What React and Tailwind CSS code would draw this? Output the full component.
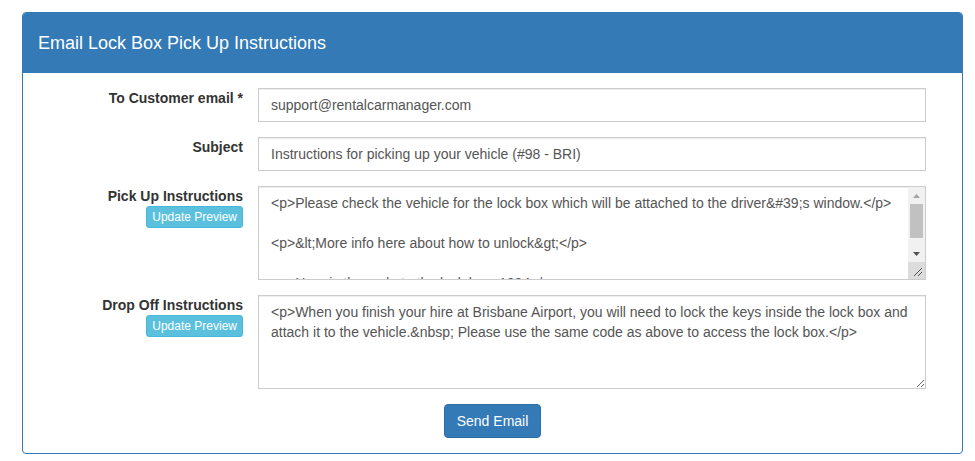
const pickUp = `<p>Please check the vehicle for the lock box which will be attached to the driver&#39;s window.</p>

<p>&lt;More info here about how to unlock&gt;</p>

<p>Here is the code to the lock box: 1234</p>

<p>Thanks for choosing us.</p>`;

const dropOff = `<p>When you finish your hire at Brisbane Airport, you will need to lock the keys inside the lock box and attach it to the vehicle.&nbsp; Please use the same code as above to access the lock box.</p>`;

const inputCls =
  'w-[668px] h-[34px] border border-[#ccc] bg-white px-3 text-[14px] text-[#555] shadow-[inset_0_1px_1px_rgba(0,0,0,0.075)] outline-none';

const areaCls =
  'block w-[668px] h-[94px] border border-[#ccc] bg-white px-3 py-1.5 text-[14px] leading-5 text-[#555] shadow-[inset_0_1px_1px_rgba(0,0,0,0.075)] outline-none';

// classic scrollbar look, drawn since headless hides the native one
const FakeScrollbar = () => (
  <div className="pointer-events-none absolute right-px top-px flex h-[92px] w-[17px] flex-col bg-[#f1f1f1]">
    <div className="flex h-[17px] items-center justify-center">
      <svg width="7" height="4" viewBox="0 0 7 4"><path d="M3.5 0L7 4H0z" fill="#a3a3a3" /></svg>
    </div>
    <div className="mx-[2px] h-[34px] bg-[#c1c1c1]" />
    <div className="flex-1" />
    <div className="flex h-[17px] items-center justify-center">
      <svg width="7" height="4" viewBox="0 0 7 4"><path d="M0 0H7L3.5 4z" fill="#505050" /></svg>
    </div>
    <div className="relative h-[17px] bg-[#dcdcdc]">
      <svg className="absolute bottom-[2px] right-[2px]" width="10" height="10" viewBox="0 0 10 10">
        <path d="M9 1L1 9M9 5L5 9" stroke="#555" strokeWidth="1" />
      </svg>
    </div>
  </div>
);

const PreviewButton = () => (
  <button className="rounded-[3px] border border-[#46b8da] bg-[#5bc0de] px-[5px] py-px text-[12px] leading-[18px] text-white">
    Update Preview
  </button>
);

const Row = ({ label, children, preview = false }) => (
  <div className="flex gap-[15px]">
    <div className="flex w-[205px] shrink-0 flex-col items-end">
      <label className="text-[14px] font-bold leading-5 text-[#333]">{label}</label>
      {preview && <PreviewButton />}
    </div>
    {children}
  </div>
);

export default function App() {
  return (
    <div className="min-h-screen bg-white pl-[22px] pt-[12px]" style={{ fontFamily: '"Liberation Sans", Arial, sans-serif' }}>
      <div className="w-[941px] rounded-[4px] border border-[#337ab7] bg-white">
        {/* Header */}
        <div className="flex h-[60px] items-center rounded-t-[3px] bg-[#337ab7] px-[15px]">
          <h3 className="text-[18px] text-white">Email Lock Box Pick Up Instructions</h3>
        </div>

        {/* Body */}
        <div className="flex flex-col gap-[15px] p-[15px]">
          <Row label="To Customer email *">
            <input className={inputCls} defaultValue="support@rentalcarmanager.com" />
          </Row>
          <Row label="Subject">
            <input className={inputCls} defaultValue="Instructions for picking up your vehicle (#98 - BRI)" />
          </Row>
          <Row label="Pick Up Instructions" preview>
            <div className="relative">
              <textarea className={`${areaCls} overflow-hidden pr-[29px]`} defaultValue={pickUp} />
              <FakeScrollbar />
            </div>
          </Row>
          <Row label="Drop Off Instructions" preview>
            <textarea className={areaCls} defaultValue={dropOff} />
          </Row>
          <div className="flex justify-center">
            <button className="h-[34px] rounded-[4px] border border-[#2e6da4] bg-[#337ab7] px-3 text-[14px] text-white">
              Send Email
            </button>
          </div>
        </div>
      </div>
    </div>
  );
}
